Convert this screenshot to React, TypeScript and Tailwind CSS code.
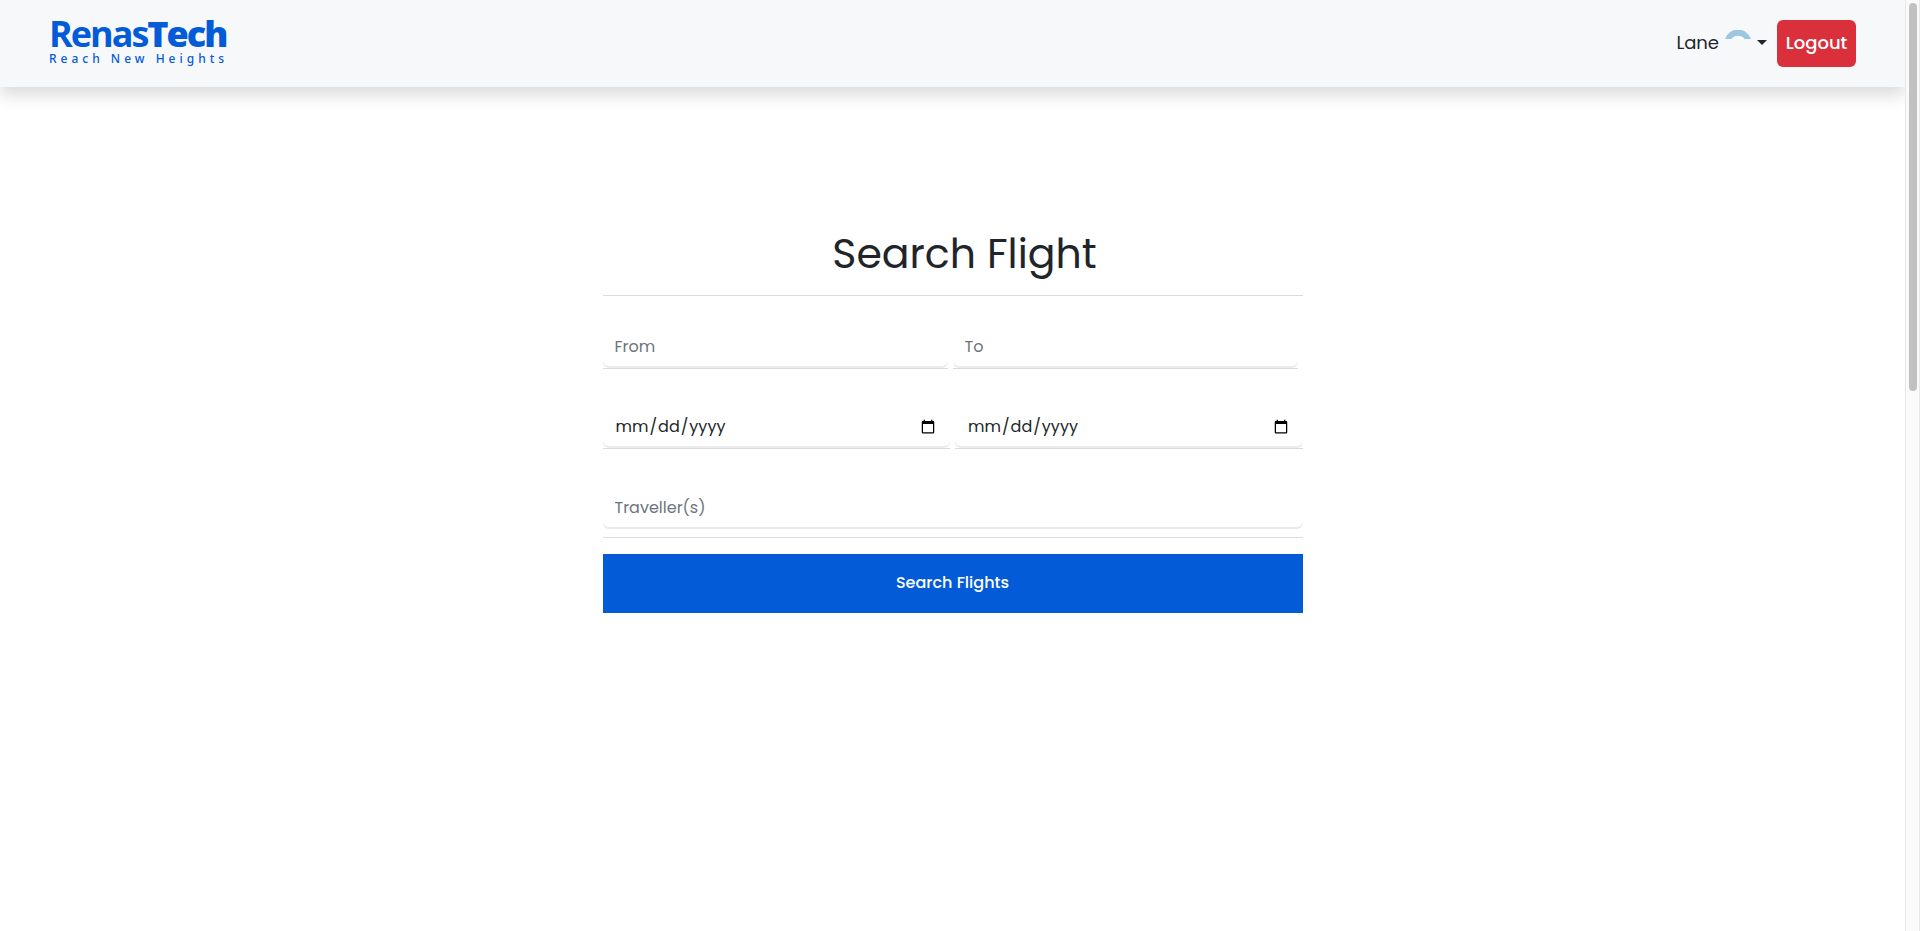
import { useState } from "react";

const fieldClass =
  "block h-10 w-full rounded-md bg-white px-3 text-base text-[#212529] placeholder:text-[#6c757d] shadow-[0_2px_0_rgba(0,0,0,0.08)] outline-none";

const dateClass = `${fieldClass} pt-0.5`;

function Logo() {
  return (
    <a href="#" className="flex flex-col text-[#035bd8]">
      <span className="font-['Open_Sans'] text-4xl leading-7 font-bold tracking-[-2px]">
        Renas<span className="font-extrabold">Tech</span>
      </span>
      <span className="mt-[3px] font-['Noto_Sans'] text-xs leading-4 font-medium tracking-[4px]">
        Reach New Heights
      </span>
    </a>
  );
}

function Header() {
  return (
    <header className="flex h-[87px] items-center justify-between bg-[#f7f8fa] px-[49px] shadow-[0_8px_16px_rgba(0,0,0,0.15)]">
      <Logo />
      <div className="flex items-center gap-2.5">
        <button type="button" className="flex items-center gap-1.5 pb-0.5 text-lg text-[#212529]">
          Lane
          <svg width="26" height="26" viewBox="0 0 26 26" aria-hidden="true">
            <path d="M0 9A13.7 13.7 0 0 1 26 9Z" fill="#9bc7e1" />
            <path d="M6.5 9A8 8 0 0 1 19.5 9Z" fill="#fff" />
          </svg>
          <svg width="10" height="5" viewBox="0 0 10 5" aria-hidden="true">
            <path d="M0 0H10L5 5Z" fill="#212529" />
          </svg>
        </button>
        <button
          type="button"
          className="h-[47px] min-w-[79px] rounded-md bg-[#d9303c] px-2 pb-0.5 text-lg font-medium text-white"
        >
          Logout
        </button>
      </div>
    </header>
  );
}

export default function App() {
  const [from, setFrom] = useState("");
  const [to, setTo] = useState("");
  const [travellers, setTravellers] = useState("");

  return (
    <div className="flex min-h-screen bg-white font-[Poppins,Inter,sans-serif]">
      <div className="min-w-0 flex-1">
        <Header />
        <main className="px-4 pt-[142px]">
          <form className="mx-auto w-full max-w-[700px]" onSubmit={(e) => e.preventDefault()}>
            <h1 className="pl-6 text-center text-[41px] leading-[49px] text-[#212529]">
              Search Flight
            </h1>
            <hr className="mt-[17px] border-[#d8dcdf]" />
            <div className="mt-[30px] flex gap-[5px] pr-[5px]">
              <div className="flex-1 border-b border-[#d5dce0] pb-0.5">
                <input
                  aria-label="From"
                  placeholder="From"
                  value={from}
                  onChange={(e) => setFrom(e.target.value)}
                  className={fieldClass}
                />
              </div>
              <div className="flex-1 border-b border-[#d5dce0] pb-0.5">
                <input
                  aria-label="To"
                  placeholder="To"
                  value={to}
                  onChange={(e) => setTo(e.target.value)}
                  className={fieldClass}
                />
              </div>
            </div>
            <div className="mt-[37px] flex gap-[5px]">
              <div className="flex-1 border-b border-[#d5dce0] pb-0.5">
                <input type="date" aria-label="Departure date" className={dateClass} />
              </div>
              <div className="flex-1 border-b border-[#d5dce0] pb-0.5">
                <input type="date" aria-label="Return date" className={dateClass} />
              </div>
            </div>
            <div className="mt-[38px] pb-0.5">
              <input
                aria-label="Traveller(s)"
                placeholder="Traveller(s)"
                value={travellers}
                onChange={(e) => setTravellers(e.target.value)}
                className={fieldClass}
              />
            </div>
            <hr className="mt-2 border-[#dcdddf]" />
            <button
              type="submit"
              className="mt-4 h-[59px] w-full bg-[#035bd8] pb-0.5 text-base font-medium text-white"
            >
              Search Flights
            </button>
          </form>
        </main>
      </div>
      <div
        aria-hidden="true"
        className="flex w-[15px] shrink-0 justify-center border-x border-[#e8e8e8] bg-[#fafafa] pt-[3px]"
      >
        <div className="h-[41.7vh] w-2 rounded-full bg-[#c1c1c1]" />
      </div>
    </div>
  );
}
